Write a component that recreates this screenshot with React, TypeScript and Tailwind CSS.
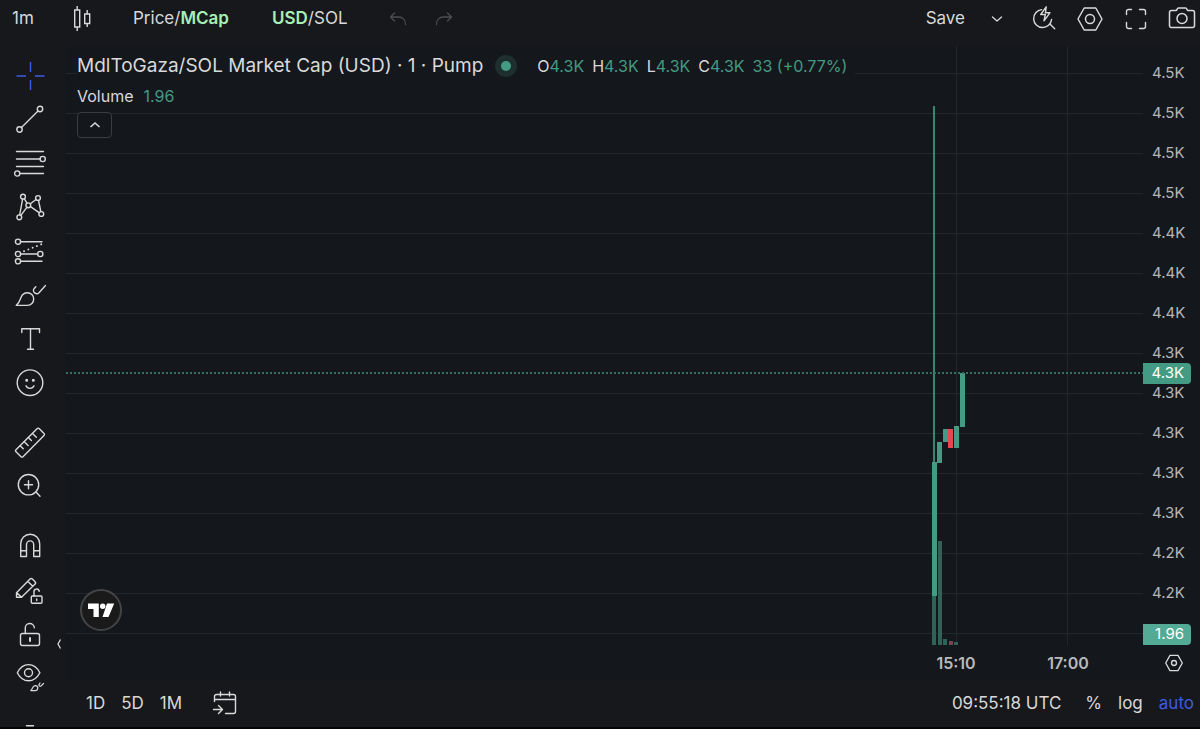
import { useState, type ReactNode } from 'react';

const PRICE_LABELS = [
  '4.5K', '4.5K', '4.5K', '4.5K', '4.4K', '4.4K', '4.4K', '4.3K',
  '4.3K', '4.3K', '4.3K', '4.3K', '4.2K', '4.2K',
];

// x is measured from the right edge of the plot
const CANDLES = [
  { x: -211, top: 416, bottom: 550, up: true },
  { x: -206, top: 396, bottom: 417, up: true },
  { x: -200, top: 383, bottom: 396, up: true },
  { x: -195, top: 383, bottom: 402, up: false },
  { x: -189, top: 380, bottom: 402, up: true },
  { x: -183, top: 327, bottom: 381, up: true },
];

const VOLUMES = [
  { x: -211, top: 550, up: true },
  { x: -205, top: 495, up: true },
  { x: -200, top: 593, up: true },
  { x: -194, top: 595, up: false },
  { x: -189, top: 596, up: true },
];

const OHLC = [
  ['O', '4.3K'],
  ['H', '4.3K'],
  ['L', '4.3K'],
  ['C', '4.3K'],
];

function Icon({ children, size = 32 }: { children: ReactNode; size?: number }) {
  return (
    <svg
      width={size}
      height={size}
      viewBox={`0 0 ${size} ${size}`}
      fill="none"
      stroke="currentColor"
      strokeWidth="1.4"
      strokeLinecap="round"
      strokeLinejoin="round"
      className="shrink-0"
      aria-hidden="true"
    >
      {children}
    </svg>
  );
}

const TOOL_GROUPS: { label: string; icon: ReactNode }[][] = [
  [
    {
      label: 'Cross',
      icon: <path d="M16.5 2v10M16.5 20v10M2.5 16H12M21 16h9.5" strokeLinecap="butt" stroke="#3f5be0" />,
    },
    {
      label: 'Trend line',
      icon: (
        <>
          <circle cx="5.5" cy="25.5" r="2.7" />
          <circle cx="26" cy="5" r="2.7" />
          <path d="M7.5 23.5 24 7" />
        </>
      ),
    },
    {
      label: 'Fib retracement',
      icon: (
        <>
          <path d="M2.5 3.5h27M2.5 11H26M2.5 18.5h27M6 25.5h23.5" />
          <circle cx="28.7" cy="11" r="2.6" />
          <circle cx="3.2" cy="25.5" r="2.6" />
        </>
      ),
    },
    {
      label: 'XABCD pattern',
      icon: (
        <>
          <path d="M8.6 7.2 5.7 22.8M6.9 23.4l5.9-8M10.4 6.9l2.6 4.2M16.4 11.8l5.6-4.3M24.5 8.5l2.3 11M16.5 14.7l8.6 5.9" />
          <circle cx="9" cy="4.7" r="2.4" />
          <circle cx="24" cy="6" r="2.4" />
          <circle cx="14.3" cy="13.3" r="2.4" />
          <circle cx="5.3" cy="25.3" r="2.4" />
          <circle cx="27.3" cy="22" r="2.4" />
        </>
      ),
    },
    {
      label: 'Long position',
      icon: (
        <>
          <circle cx="4" cy="5.7" r="2.6" />
          <circle cx="4" cy="18" r="2.6" />
          <circle cx="26.3" cy="18" r="2.6" />
          <circle cx="4" cy="25.3" r="2.6" />
          <path d="M7 5.7h21M7 18h16.5M7 25.3h21" />
          <path d="M10 15.2 28 8" strokeDasharray="0.2 4.4" strokeWidth="1.8" />
        </>
      ),
    },
    {
      label: 'Brush',
      icon: (
        <>
          <path d="M2.3 25.4c3-2.2 3.6-5.3 5-8.6 1.2-2.7 3.4-4.1 6-4.1 3.6 0 6.4 2.7 6.4 6.2 0 3.7-2.7 6.5-6.2 6.5z" />
          <path d="M31.5 5.5 25 12.7c-1.3 1.4-3 1.3-4.3.2-1.6-1.3-1.6-3.1-.5-4.4l1.6-1.7" />
        </>
      ),
    },
    {
      label: 'Text',
      icon: <path d="M7.8 8.5V4.7h17.7v3.8M16.5 4.7v20.6M13.5 25.3h6" />,
    },
    {
      label: 'Icons',
      icon: (
        <>
          <circle cx="16" cy="14.7" r="12.8" />
          <path d="M12 17.8c1.400 3.400 6.600 3.400 8 0" />
          <circle cx="12.7" cy="12.3" r=".8" fill="currentColor" />
          <circle cx="19.3" cy="12.3" r=".8" fill="currentColor" />
        </>
      ),
    },
  ],
  [
    {
      label: 'Measure',
      icon: (
        <>
          <path d="M23.3 1.6 2 22.7c-.6.6-.6 1.4 0 2l5 5c.6.6 1.4.6 2 0L30 8.6c.6-.6.6-1.4 0-2l-4.9-5c-.5-.5-1.3-.5-1.8 0z" />
          <path d="m6.2 18.8 3 3M10.3 14.7l3.8 3.8M14.4 10.6l3 3M18.5 6.5l3.8 3.8" />
        </>
      ),
    },
    {
      label: 'Zoom in',
      icon: (
        <>
          <circle cx="14.5" cy="13.7" r="10.2" />
          <path d="m22 21 4 4.2M14.5 9.7v8M10.5 13.7h8" />
        </>
      ),
    },
  ],
  [
    {
      label: 'Magnet mode',
      icon: (
        <path d="M6.7 26.5V13.7a9.5 9.5 0 0 1 19 0v12.8h-6V14.5a3.6 3.6 0 0 0-7.2 0v12zM6.7 20.7h5.8M19.7 20.7h6" />
      ),
    },
    {
      label: 'Stay in drawing mode',
      icon: (
        <>
          <path d="M2.5 23.3v-4.5L16 5c.7-.7 1.7-.7 2.4 0l2.7 2.7c.7.7.7 1.7 0 2.4L7.5 23.3zM13.7 7.3l5 5M3 19l4.3 4" />
          <rect x="17.3" y="22" width="10.7" height="7.3" rx="1" />
          <path d="M20 22v-4a2.6 2.6 0 0 1 5.2-.6M22.7 25v1.5" />
        </>
      ),
    },
    {
      label: 'Lock all drawings',
      icon: (
        <>
          <rect x="6.5" y="15.5" width="19" height="12" rx="2" />
          <path d="M11.3 15.5v-5.2a4.5 4.5 0 0 1 9-.5" />
          <path d="M16 20v3" strokeWidth="2" />
        </>
      ),
    },
    {
      label: 'Hide all drawings',
      icon: (
        <>
          <path d="M3.3 10.7C5.5 6.5 9.6 2.6 14.5 2.6s9.2 3.9 11.4 8.1c-2.2 4.2-6.5 8.1-11.4 8.1S5.5 14.9 3.3 10.7z" />
          <circle cx="14.5" cy="10.7" r="4" />
          <path
            d="M16.8 28.6c1.7-1 1.5-5 4.5-5 1.4 0 2.5 1.1 2.5 2.5s-1.1 2.5-2.5 2.5zM29.5 21.5l-2.6 2.6c-1 .6-2.2-.3-1.9-1.5l1-1.6"
            strokeWidth="1.2"
          />
        </>
      ),
    },
  ],
];

function Toolbar() {
  return (
    <nav aria-label="Drawing tools" className="relative flex w-[66px] shrink-0 flex-col gap-[15px] overflow-hidden pt-2">
      {TOOL_GROUPS.map((group, i) => (
        <div key={i} className="flex flex-col">
          {group.map((tool) => (
            <button key={tool.label} type="button" aria-label={tool.label} className="flex h-11 shrink-0 items-center pl-[14px]">
              <Icon>{tool.icon}</Icon>
            </button>
          ))}
        </div>
      ))}
      <button type="button" aria-label="Remove objects" className="flex h-11 shrink-0 items-center pl-[14px]">
        <Icon>
          <path d="M12.5 4.7h7M5 9h22M8 9l1.5 18h13L24 9" />
        </Icon>
      </button>
      <button type="button" aria-label="Hide toolbar" className="absolute right-1 bottom-[77px]">
        <svg width="6" height="12" viewBox="0 0 6 12" fill="none" stroke="currentColor" strokeWidth="1.3" aria-hidden="true">
          <path d="M4.5 1.5 2 6l2.5 4.5" />
        </svg>
      </button>
    </nav>
  );
}

function Hexagon({ size }: { size: number }) {
  return (
    <svg
      width={size}
      height={size}
      viewBox="0 0 26 26"
      fill="none"
      stroke="currentColor"
      strokeWidth={size > 20 ? 1.5 : 1.9}
      strokeLinejoin="round"
      aria-hidden="true"
    >
      <path d="M7.2 2h11.6L25 13l-6.2 11H7.2L1 13z" />
      <circle cx="13" cy="13" r={size > 20 ? 4.5 : 3.6} />
    </svg>
  );
}

function Header() {
  return (
    <header className="flex h-[38px] shrink-0 items-center justify-between pr-1 pl-3 text-[17px]">
      <div className="flex items-center">
        <button type="button" className="w-[60px] text-left">1m</button>
        <button type="button" aria-label="Candles" className="w-[61px]">
          <svg width="20" height="28" viewBox="0 0 20 28" fill="none" stroke="currentColor" strokeWidth="1.4" aria-hidden="true">
            <path d="M2.7 5h5v17h-5zM5.2 1v4M5.2 22v4M12.7 9h5v9.5h-5zM15.2 5v4M15.2 18.5V22" />
          </svg>
        </button>
        <button type="button" className="w-[139px] text-left">
          Price/<span className="font-semibold text-[#a6f0b5]">MCap</span>
        </button>
        <button type="button" className="w-[117px] text-left">
          <span className="font-semibold text-[#a6f0b5]">USD</span>/SOL
        </button>
        <div className="flex gap-7 text-[#4b4c50]">
          <button type="button" aria-label="Undo">
            <svg width="18" height="14" viewBox="0 0 18 14" fill="none" stroke="currentColor" strokeWidth="1.3" strokeLinecap="round" strokeLinejoin="round" aria-hidden="true">
              <path d="M5.5 1 1.5 5l4 4M1.5 5h8.3c4 0 6.7 3 6.7 7.5" />
            </svg>
          </button>
          <button type="button" aria-label="Redo">
            <svg width="18" height="14" viewBox="0 0 18 14" fill="none" stroke="currentColor" strokeWidth="1.3" strokeLinecap="round" strokeLinejoin="round" aria-hidden="true">
              <path d="m12.5 1 4 4-4 4M16.5 5H8.2c-4 0-6.7 3-6.7 7.5" />
            </svg>
          </button>
        </div>
      </div>

      <div className="flex items-center">
        <button type="button" className="mr-[26px]">Save</button>
        <button type="button" aria-label="Save options" className="mr-7">
          <svg width="12" height="8" viewBox="0 0 12 8" fill="none" stroke="currentColor" strokeWidth="1.3" strokeLinecap="round" strokeLinejoin="round" aria-hidden="true">
            <path d="m1.5 2 4.5 4 4.5-4" />
          </svg>
        </button>
        <button type="button" aria-label="Quick search" className="mr-5">
          <Icon size={26}>
            <path d="M10.6 3.6a9 9 0 1 0 10 9.8M18.7 17.7l5 5" />
            <path d="M15.2.8 9.7 8.500h4.600l-1.300 6.300 5.900-8h-4.500z" />
          </Icon>
        </button>
        <button type="button" aria-label="Settings" className="mr-[22px]">
          <Hexagon size={26} />
        </button>
        <button type="button" aria-label="Fullscreen" className="mr-[21px]">
          <Icon size={22}>
            <path d="M1.5 6.5V3.5a2 2 0 0 1 2-2h3M14.5 1.5h4a2 2 0 0 1 2 2v3M20.5 14.5v4a2 2 0 0 1-2 2h-4M6.5 20.5h-3a2 2 0 0 1-2-2v-4" />
          </Icon>
        </button>
        <button type="button" aria-label="Take a snapshot">
          <svg width="28" height="24" viewBox="0 0 28 24" fill="none" stroke="currentColor" strokeWidth="1.5" strokeLinejoin="round" aria-hidden="true">
            <path d="M3.5 3.5h4.700c.7 0 .8-2.500 2.300-2.500h7c1.500 0 1.600 2.500 2.300 2.500h4.700c1.200 0 2 .8 2 2v13c0 1.200-.8 2-2 2h-21c-1.200 0-2-.8-2-2v-13c0-1.200.8-2 2-2z" />
            <circle cx="14" cy="11.500" r="5" />
          </svg>
        </button>
      </div>
    </header>
  );
}

function Plot() {
  return (
    <svg width="100%" height="100%" className="absolute inset-0" role="img" aria-label="Market cap chart">
      <g stroke="#23262a" shapeRendering="crispEdges">
        {Array.from({ length: 15 }, (_, i) => (
          <line key={i} x1="0" x2="100%" y1={27.5 + i * 40} y2={27.5 + i * 40} />
        ))}
      </g>
      <svg x="100%" overflow="visible" shapeRendering="crispEdges">
        <path d="M-186.5 0v599M-75.5 0v599" stroke="#23262a" />
        {VOLUMES.map((v) => (
          <rect key={v.x} x={v.x} y={v.top} width="4" height={599 - v.top} fill={v.up ? '#2f6358' : '#83404a'} />
        ))}
        <rect x="-210" y="60" width="2" height="356" fill="#3a8471" />
        {CANDLES.map((c) => (
          <rect key={c.x} x={c.x} y={c.top} width="5" height={c.bottom - c.top} fill={c.up ? '#449b83' : '#e5484d'} />
        ))}
      </svg>
      <line x1="0" x2="100%" y1="327" y2="327" stroke="#33705f" strokeWidth="2" strokeDasharray="2 2" shapeRendering="crispEdges" />
    </svg>
  );
}

function Legend({ open, onToggle }: { open: boolean; onToggle: () => void }) {
  return (
    <div className="absolute top-[6px] left-[11px] flex flex-col items-start">
      <div className="flex h-7 items-center bg-[#14171b] pr-2">
        <h1 className="text-[19px] whitespace-nowrap">MdlToGaza/SOL Market Cap (USD) · 1 · Pump</h1>
        <span className="mr-5 ml-3 flex size-[22px] items-center justify-center rounded-full bg-[#1d302e]">
          <span className="size-[10px] rounded-full bg-[#449b83]" />
        </span>
        <div className="flex gap-2 text-base whitespace-nowrap">
          {OHLC.map(([name, value]) => (
            <span key={name}>
              {name}
              <span className="text-[#449b83]">{value}</span>
            </span>
          ))}
          <span className="text-[#449b83]">33 (+0.77%)</span>
        </div>
      </div>
      {open && (
        <div className="mt-1 flex h-6 items-center gap-[10px] text-base">
          <span>Volume</span>
          <span className="text-[#449b83]">1.96</span>
        </div>
      )}
      <button
        type="button"
        aria-label="Toggle indicator legend"
        onClick={onToggle}
        className="mt-1 flex h-[26px] w-[35px] items-center justify-center rounded border border-[#3a3c40] bg-[#14171b]"
      >
        <svg width="12" height="8" viewBox="0 0 12 8" fill="none" stroke="currentColor" strokeWidth="1.6" aria-hidden="true">
          <path d="m1.5 6 4.5-4 4.5 4" />
        </svg>
      </button>
    </div>
  );
}

export default function App() {
  const [legendOpen, setLegendOpen] = useState(true);

  return (
    <div className="flex h-screen flex-col gap-2 overflow-hidden border-b-2 border-[#050506] bg-[#17181b] font-['Inter',sans-serif] text-[#d9d9da]">
      <Header />

      <div className="flex min-h-0 flex-1">
        <Toolbar />

        <div className="flex min-w-0 flex-1 flex-col">
          <main className="flex min-h-0 flex-1 bg-[#14171b]">
            <section className="relative min-w-0 flex-1 overflow-hidden">
              <Plot />
              <Legend open={legendOpen} onToggle={() => setLegendOpen(!legendOpen)} />
              <a
                href="#tradingview"
                aria-label="TradingView"
                className="absolute bottom-[14px] left-[14px] flex size-[42px] items-center justify-center rounded-full border-2 border-[#434446] bg-[#1a1a1a]"
              >
                <svg width="28" height="16" viewBox="0 0 28 16" fill="#fff" aria-hidden="true">
                  <path d="M1 1.500h10.800V15H6.500V7H1zM20 1.500h7.200L21.500 15h-6z" />
                  <circle cx="15.700" cy="4.300" r="2.700" />
                </svg>
              </a>
            </section>

            <aside className="relative w-[57px] shrink-0 overflow-hidden pt-[7px] pl-[9px] text-[15px] text-[#b5b6b8]">
              {PRICE_LABELS.map((label, i) => (
                <div key={i} className="flex h-10 items-center">{label}</div>
              ))}
              <div className="absolute top-[317px] left-0 flex h-[21px] w-12 items-center justify-end rounded-r-sm bg-[#449b83] pr-[7px] text-white">4.3K</div>
              <div className="absolute top-[578px] left-0 flex h-[21px] w-12 items-center justify-end rounded-r-sm bg-[#53ab95] pr-[7px] text-white">1.96</div>
            </aside>
          </main>

          <div className="flex h-9 shrink-0 items-center bg-[#14171b]">
            <div className="flex flex-1 justify-end pr-[19px] text-base font-semibold text-[#b9babc]">
              <span className="w-28 text-center">15:10</span>
              <span className="w-28 text-center">17:00</span>
            </div>
            <button type="button" aria-label="Scale settings" className="flex w-[57px] justify-center pl-[5px]">
              <Hexagon size={18} />
            </button>
          </div>

          <footer className="flex h-[46px] shrink-0 items-center justify-between pr-[6px] pl-5 text-[17px]">
            <div className="flex items-center gap-4">
              <button type="button">1D</button>
              <button type="button">5D</button>
              <button type="button">1M</button>
              <button type="button" aria-label="Go to date" className="ml-[14px]">
                <Icon size={26}>
                  <path d="M2.5 10.500v-5a2 2 0 0 1 2-2h17a2 2 0 0 1 2 2v15a2 2 0 0 1-2 2h-8M2.500 8.500h21M8.500 1v4M17.500 1v4M1.500 18.500h8.500M6.500 14.500l4 4-4 4" />
                </Icon>
              </button>
            </div>
            <div className="flex items-center gap-4">
              <button type="button" className="mr-2">09:55:18 UTC</button>
              <button type="button">%</button>
              <button type="button">log</button>
              <button type="button" className="text-[#3f5be0]">auto</button>
            </div>
          </footer>
        </div>
      </div>
    </div>
  );
}
